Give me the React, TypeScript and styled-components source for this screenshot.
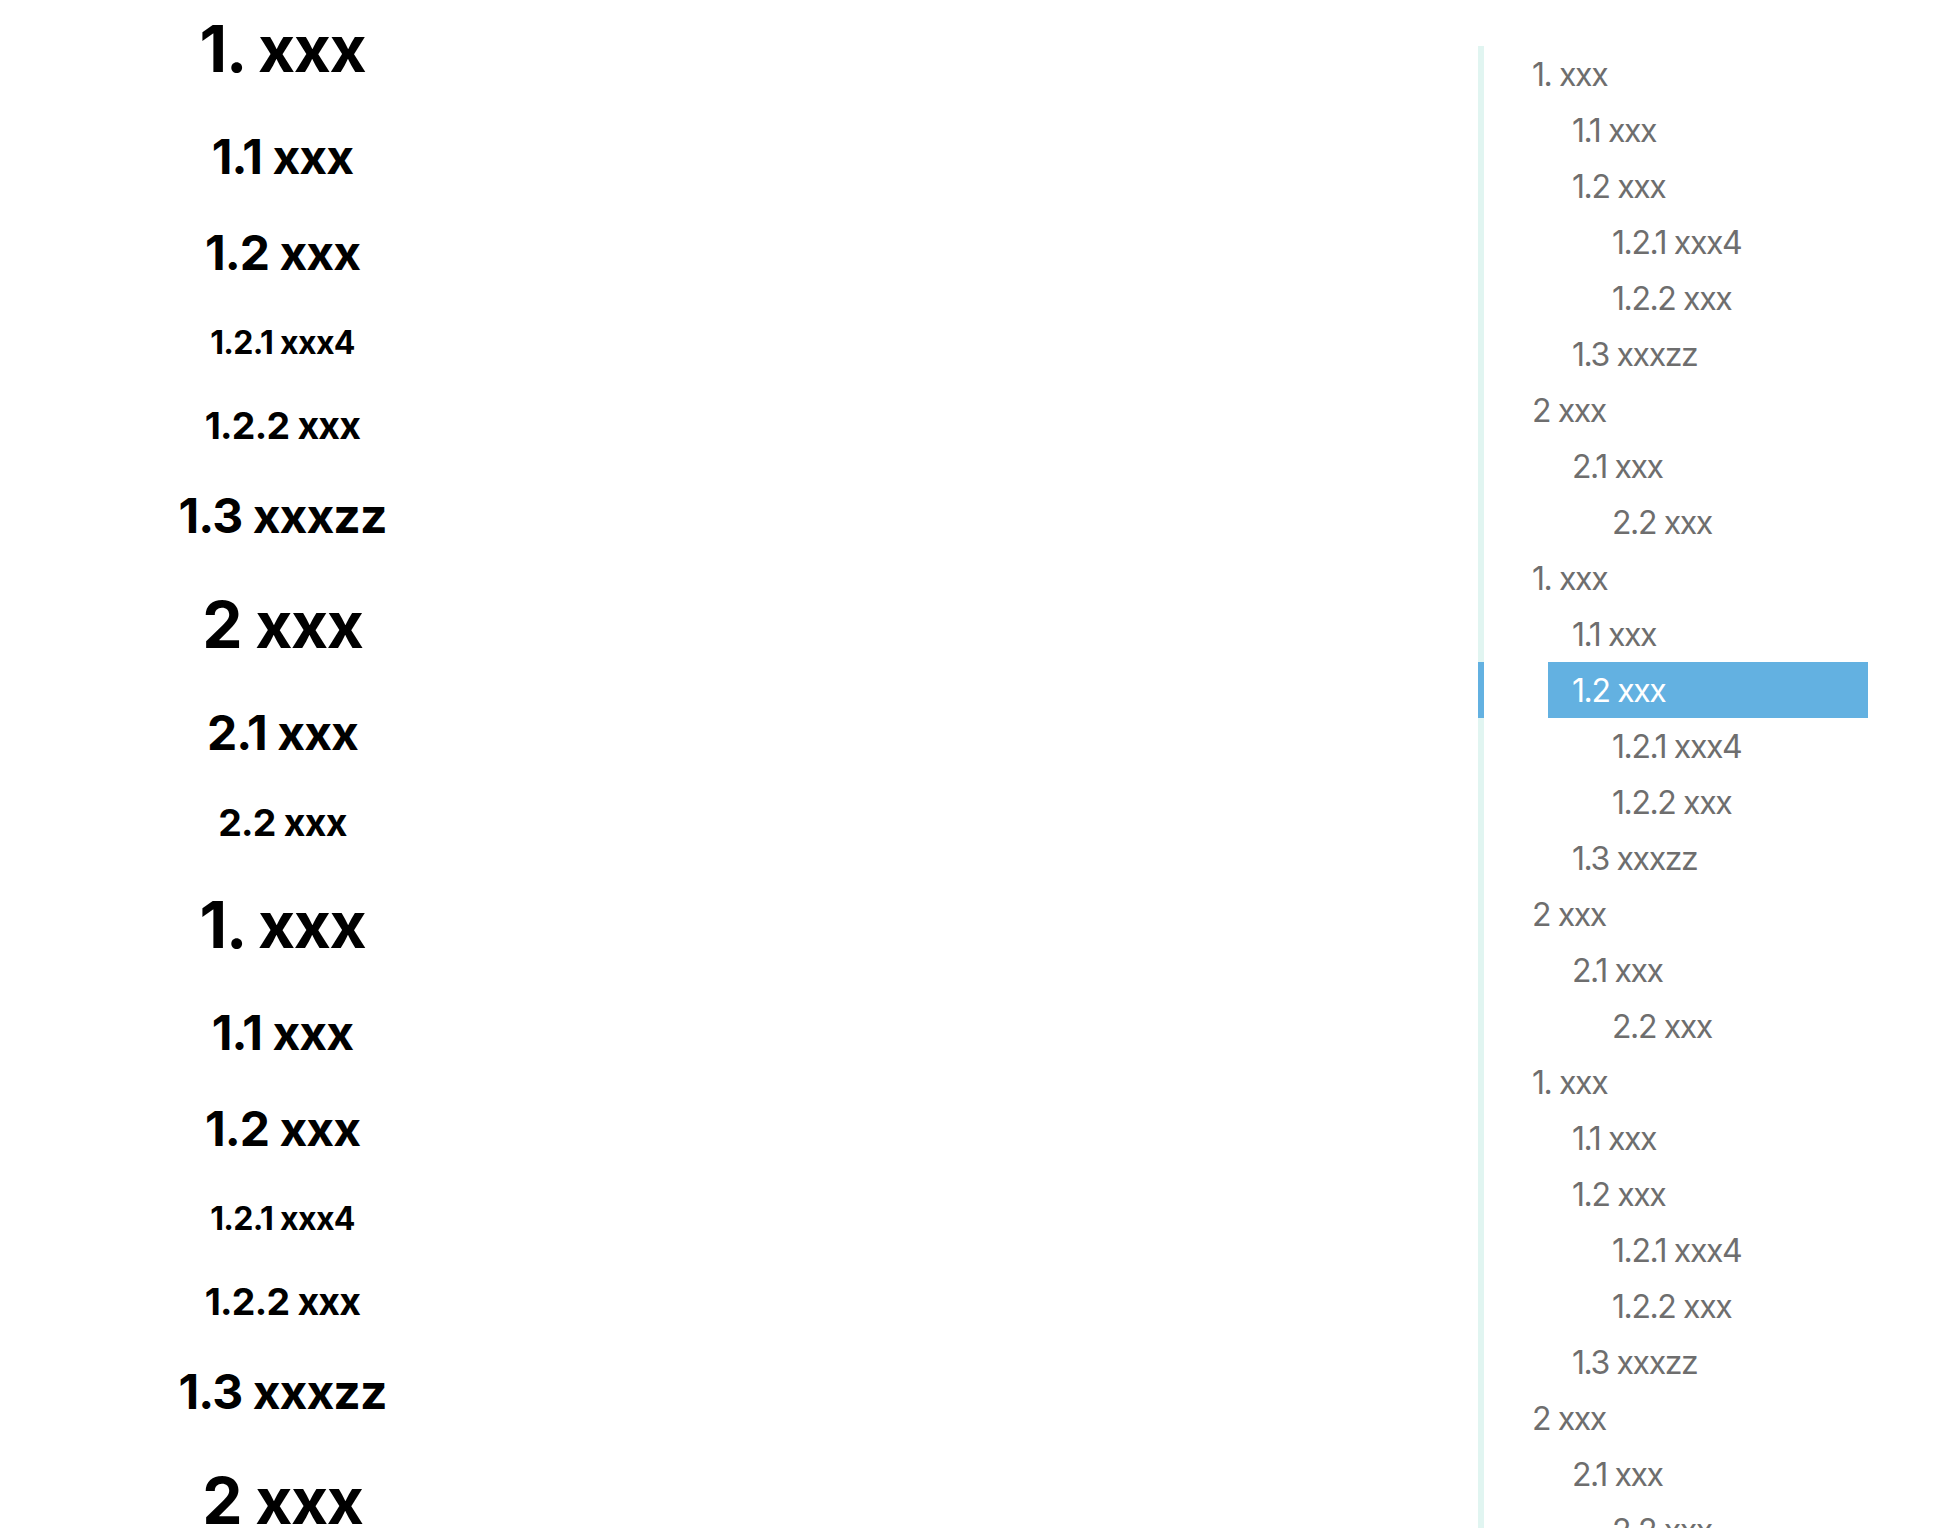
import React from "react";
import styled, { createGlobalStyle, css } from "styled-components";

const GlobalStyle = createGlobalStyle`
  html, body {
    margin: 0;
    padding: 0;
    background: #ffffff;
  }
  body {
    font-family: Inter, "Noto Sans", "Liberation Sans", sans-serif;
    color: #000000;
  }
`;

type Level = 1 | 2 | 3 | 4;

interface HeadingItem {
  text: string;
  level: Level;
}

const block: HeadingItem[] = [
  { text: "1. xxx", level: 1 },
  { text: "1.1 xxx", level: 2 },
  { text: "1.2 xxx", level: 2 },
  { text: "1.2.1 xxx4", level: 4 },
  { text: "1.2.2 xxx", level: 3 },
  { text: "1.3 xxxzz", level: 2 },
  { text: "2 xxx", level: 1 },
  { text: "2.1 xxx", level: 2 },
  { text: "2.2 xxx", level: 3 },
];

const headings: HeadingItem[] = [...block, ...block, ...block];
const ACTIVE_INDEX = 11;

const Page = styled.div`
  display: flex;
  height: 100vh;
  overflow: hidden;
`;

const Main = styled.main`
  width: 565px;
  flex: none;
  padding-top: 11px;
  text-align: center;
`;

const sizes: Record<Level, { size: number; margin: number }> = {
  1: { size: 64, margin: 0.67 },
  2: { size: 48, margin: 0.83 },
  3: { size: 37.44, margin: 1 },
  4: { size: 32, margin: 1.33 },
};

const Heading = styled.h1<{ $level: Level }>`
  font-family: Inter, "Noto Sans", "Liberation Sans", sans-serif;
  font-weight: 700;
  line-height: 1.172;
  letter-spacing: -0.02em;
  ${({ $level }) => css`
    font-size: ${sizes[$level].size}px;
    margin: ${sizes[$level].margin}em 0;
  `}
  &:first-child {
    margin-top: 0;
  }
`;

const Spacer = styled.div`
  flex: 1;
`;

const Aside = styled.aside`
  width: 390px;
  flex: none;
  margin-right: 70px;
  padding-top: 46px;
`;

const TocList = styled.ul`
  list-style: none;
  margin: 0;
  padding: 0;
`;

const TocRow = styled.li`
  display: flex;
  height: 56px;
`;

const Rail = styled.span<{ $active: boolean }>`
  width: 6px;
  flex: none;
  background: ${({ $active }) => ($active ? "#63b1e1" : "#e1f5f1")};
`;

const TocLink = styled.a<{ $depth: number; $active: boolean }>`
  flex: 1;
  display: block;
  margin-left: ${({ $depth }) => 24 + $depth * 40}px;
  padding: 1px 0 0 24px;
  box-sizing: border-box;
  font-family: Inter, "Noto Sans", "Liberation Sans", sans-serif;
  font-size: 32px;
  font-weight: 400;
  letter-spacing: -1.4px;
  line-height: 55px;
  text-decoration: none;
  white-space: nowrap;
  color: ${({ $active }) => ($active ? "#ffffff" : "#6e6e6e")};
  background: ${({ $active }) => ($active ? "#63b1e1" : "transparent")};
`;

const tags: Record<Level, "h1" | "h2" | "h3" | "h4"> = {
  1: "h1",
  2: "h2",
  3: "h3",
  4: "h4",
};

const depthOf = (level: Level) => (level === 1 ? 0 : level === 2 ? 1 : 2);

export default function App() {
  return (
    <>
      <GlobalStyle />
      <Page>
        <Main>
          {headings.map((h, i) => (
            <Heading key={i} as={tags[h.level]} $level={h.level} id={`h-${i}`}>
              {h.text}
            </Heading>
          ))}
        </Main>
        <Spacer />
        <Aside>
          <TocList>
            {headings.map((h, i) => (
              <TocRow key={i}>
                <Rail $active={i === ACTIVE_INDEX} />
                <TocLink
                  href={`#h-${i}`}
                  $depth={depthOf(h.level)}
                  $active={i === ACTIVE_INDEX}
                >
                  {h.text}
                </TocLink>
              </TocRow>
            ))}
          </TocList>
        </Aside>
      </Page>
    </>
  );
}
